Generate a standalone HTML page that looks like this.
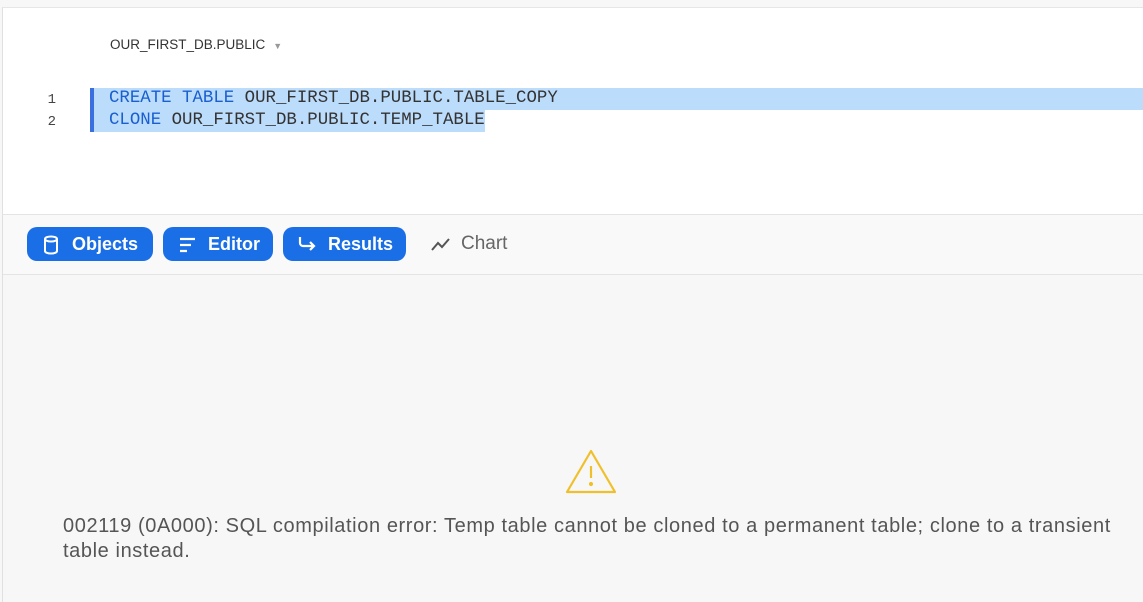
<!DOCTYPE html>
<html><head><style>
body{margin:0;width:1143px;height:602px;overflow:hidden;background:#f7f7f7;font-family:"Liberation Sans",sans-serif;position:relative}
.ed{position:absolute;left:2px;top:7px;right:0;height:207px;background:#fff;border-left:1px solid #e0e0e0;border-top:1px solid #e6e6e6}
.db{position:absolute;left:110px;top:37px;font-size:13.5px;color:#333}
.db span{color:#999;font-size:9px;margin-left:8px}
.code{position:absolute;font-family:"Liberation Mono",monospace;font-size:17.4px;line-height:22px}
.ln{position:absolute;left:40px;width:16px;text-align:right;color:#444;font-family:"Liberation Mono",monospace;font-size:14px;line-height:22px}
.hl{position:absolute;background:#bcdcfb}
.k{color:#1a5fd0}.t{color:#333}
.tb{position:absolute;left:2px;top:214px;right:0;height:59px;background:#f9f9f9;border-top:1px solid #e4e4e4;border-bottom:1px solid #e4e4e4;border-left:1px solid #e0e0e0}
.btn{position:absolute;top:227px;height:34px;background:#1a6fe6;border-radius:10px;color:#fff;font-weight:bold;font-size:18px;line-height:34px;box-sizing:border-box}
.btn svg{position:absolute;top:8px}
.low{position:absolute;left:2px;top:274px;right:0;bottom:0;border-left:1px solid #e0e0e0}
.err{position:absolute;left:63px;top:514px;width:1070px;font-size:20px;letter-spacing:0.6px;line-height:25px;color:#555}
</style></head><body>
<div class="ed"></div>
<div class="db">OUR_FIRST_DB.PUBLIC<span>▼</span></div>
<div class="hl" style="left:94px;top:88px;width:1049px;height:22px"></div>
<div class="hl" style="left:94px;top:110px;width:391px;height:22px"></div>
<div style="position:absolute;left:90px;top:88px;width:4px;height:44px;background:#3a6fe0"></div>
<div class="ln" style="top:89px">1</div><div class="ln" style="top:111px">2</div>
<div class="code" style="left:109px;top:88px"><span class="k">CREATE TABLE</span> <span class="t">OUR_FIRST_DB.PUBLIC.TABLE_COPY</span></div>
<div class="code" style="left:109px;top:110px"><span class="k">CLONE</span> <span class="t">OUR_FIRST_DB.PUBLIC.TEMP_TABLE</span></div>
<div class="tb"></div>
<div class="btn" style="left:27px;width:126px;padding-left:45px">Objects
<svg style="left:16px" width="16" height="20" viewBox="0 0 16 20" fill="none" stroke="#fff" stroke-width="2"><path d="M2 4v12c0 1.5 2.7 2.5 6 2.5s6-1 6-2.5V4"/><ellipse cx="8" cy="4" rx="6" ry="2.5"/></svg></div>
<div class="btn" style="left:163px;width:110px;padding-left:45px">Editor
<svg style="left:15px" width="20" height="20" viewBox="0 0 20 20" stroke="#fff" stroke-width="2.2"><path d="M2 4h15M2 10h11M2 16h7"/></svg></div>
<div class="btn" style="left:283px;width:123px;padding-left:45px">Results
<svg style="left:14px" width="20" height="20" viewBox="0 0 20 20" fill="none" stroke="#fff" stroke-width="2.2"><path d="M3 2v6a3 3 0 0 0 3 3h11M13 7l4 4-4 4"/></svg></div>
<svg style="position:absolute;left:431px;top:236px" width="20" height="16" viewBox="0 0 20 16" fill="none" stroke="#555" stroke-width="2"><path d="M1 14l6-7 4 4 7-8"/></svg>
<div style="position:absolute;left:461px;top:233px;font-size:19px;color:#666">Chart</div>
<div class="low"></div>
<svg style="position:absolute;left:565px;top:449px" width="52" height="45" viewBox="0 0 52 45" fill="none" stroke="#f0c02c" stroke-width="2.2"><path d="M26 2L50 43H2Z" stroke-linejoin="round"/><path d="M26 17v12"/><circle cx="26" cy="35" r="1" fill="#f0c02c"/></svg>
<div class="err">002119 (0A000): SQL compilation error: Temp table cannot be cloned to a permanent table; clone to a transient table instead.</div>
</body></html>
